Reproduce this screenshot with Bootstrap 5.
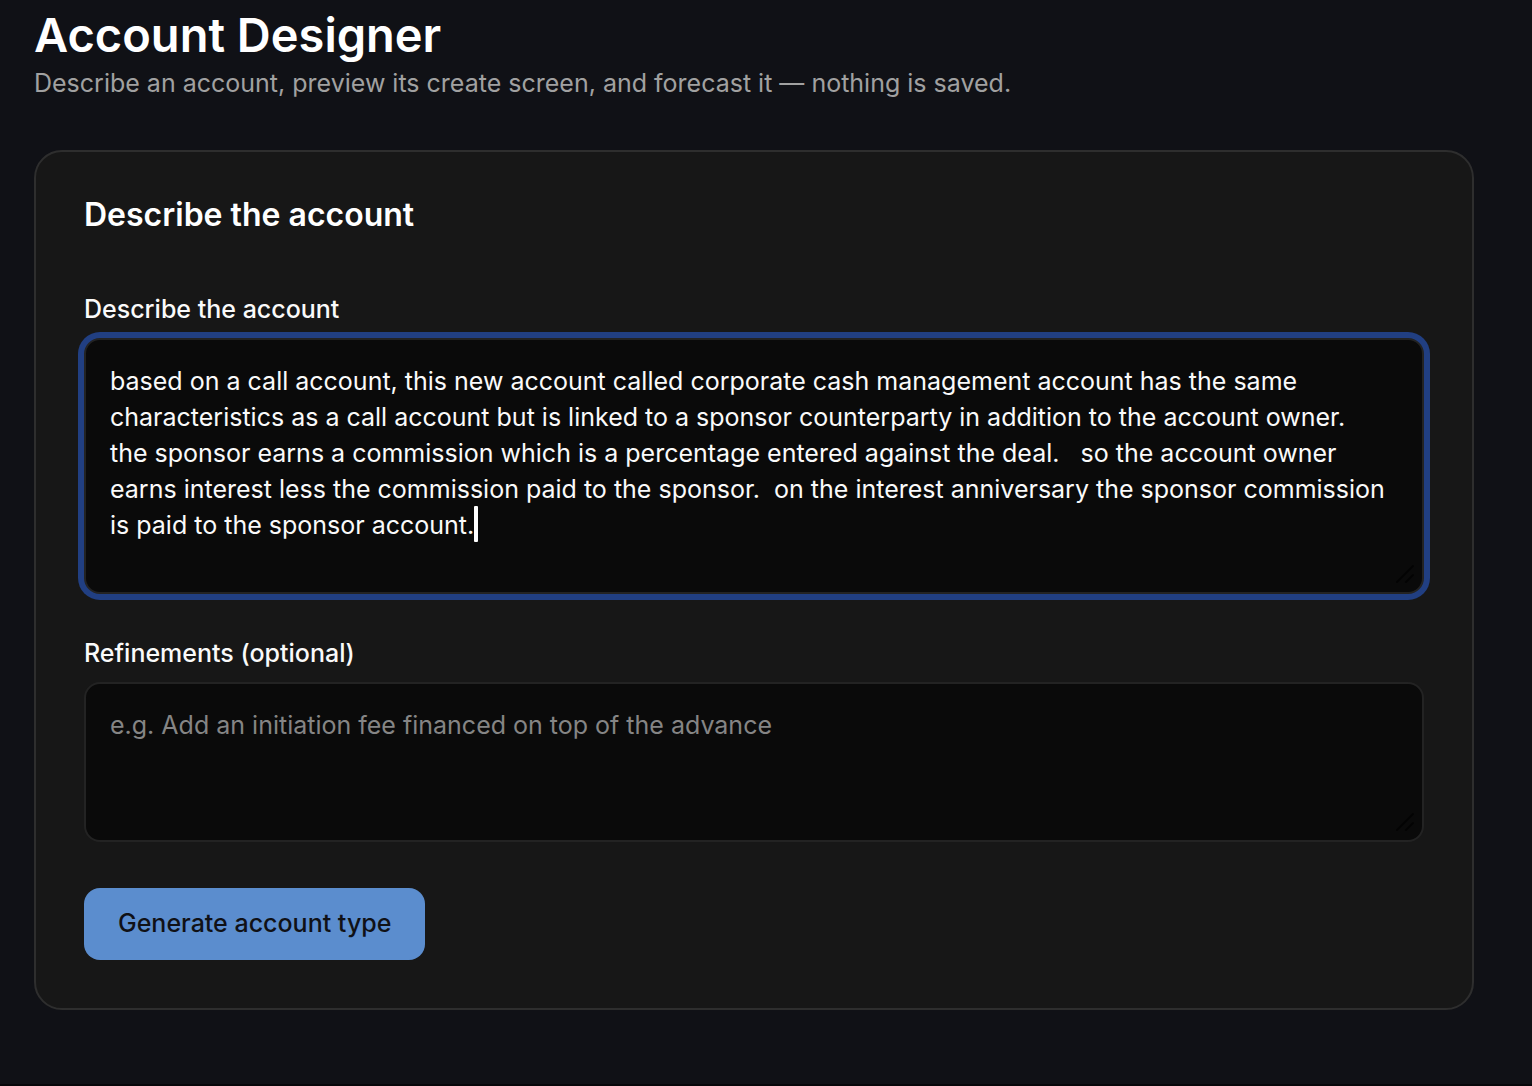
<!DOCTYPE html>
<html lang="en" data-bs-theme="dark">
<head>
<meta charset="utf-8">
<meta name="viewport" content="width=device-width, initial-scale=1">
<title>Account Designer</title>
<link href="https://cdn.jsdelivr.net/npm/bootstrap@5.3.0/dist/css/bootstrap.min.css" rel="stylesheet">
<style>
  body { background: #101116; color: #fafafa; font-family: Inter, "Liberation Sans", sans-serif; font-size: 25px; line-height: 36px; }
  .page { min-height: 100vh; padding: 7px 58px 74px 34px; border-bottom: 2px solid #07070a; }
  .page-title { font-size: 47px; line-height: 56px; font-weight: 600; }
  .page-intro { color: #a1a1a1; line-height: 40px; margin-bottom: 47px; }
  .panel { --bs-card-bg: #171717; --bs-card-color: #fafafa; --bs-card-border-color: #2e2e2e; --bs-card-border-width: 2px; --bs-card-border-radius: 28px; --bs-card-inner-border-radius: 26px; }
  .panel .card-body { padding: 43px 48px 48px; }
  .panel-title { font-size: 32px; line-height: 40px; font-weight: 600; margin-bottom: 58px; }
  .field-label { font-weight: 500; line-height: 32px; margin-bottom: 13px; }
  .field-wrap { margin-bottom: 43px; }
  .field-box { display: block; background: #0a0a0a; color: #fafafa; border: 2px solid #232323; border-radius: 16px; padding: 23px 32px 25px 24px; font-size: 25px; line-height: 36px; resize: none; overflow: hidden; }
  .field-box:focus { background: #0a0a0a; color: #fafafa; border-color: #232323; }
  .field-box::placeholder { color: #858585; }
  .field-box.is-active, .field-box.is-active:focus { min-height: 256px; box-shadow: 0 0 0 6px #213f82; caret-color: transparent; }
  .text-caret { left: 390px; top: 168px; width: 4px; height: 36px; border-radius: 1px; background: #fff; }
  .grip { right: 10px; bottom: 11px; width: 18px; height: 18px; opacity: .6; }
  .btn-generate { --bs-btn-bg: #5b8dce; --bs-btn-color: #101116; --bs-btn-hover-bg: #6c9ad6; --bs-btn-hover-color: #101116; --bs-btn-font-size: 25px; --bs-btn-font-weight: 500; --bs-btn-line-height: 36px; --bs-btn-border-width: 0; --bs-btn-border-radius: 16px; padding: 17px 34px 19px; margin-top: 3px; }
</style>
</head>
<body>
<main class="page">
  <h1 class="page-title mb-0">Account Designer</h1>
  <p class="page-intro">Describe an account, preview its create screen, and forecast it — nothing is saved.</p>
  <section class="card panel">
    <form class="card-body">
      <h2 class="panel-title">Describe the account</h2>
      <label class="form-label field-label d-block" for="description">Describe the account</label>
      <div class="field-wrap position-relative">
        <textarea class="form-control field-box is-active" id="description" rows="5">based on a call account, this new account called corporate cash management account has the same characteristics as a call account but is linked to a sponsor counterparty in addition to the account owner.  the sponsor earns a commission which is a percentage entered against the deal.   so the account owner earns interest less the commission paid to the sponsor.  on the interest anniversary the sponsor commission is paid to the sponsor account.</textarea>
        <span class="text-caret position-absolute" aria-hidden="true"></span>
        <svg class="grip position-absolute pe-none" viewBox="0 0 18 18" aria-hidden="true"><path d="M1 17 17 1M10 17 17 10" stroke="#000" stroke-width="2" stroke-linecap="round"/></svg>
      </div>
      <label class="form-label field-label d-block" for="refinements">Refinements (optional)</label>
      <div class="field-wrap position-relative">
        <textarea class="form-control field-box" id="refinements" rows="3" placeholder="e.g. Add an initiation fee financed on top of the advance"></textarea>
        <svg class="grip position-absolute pe-none" viewBox="0 0 18 18" aria-hidden="true"><path d="M1 17 17 1M10 17 17 10" stroke="#000" stroke-width="2" stroke-linecap="round"/></svg>
      </div>
      <button class="btn btn-generate" type="button">Generate account type</button>
    </form>
  </section>
</main>
<script src="https://cdn.jsdelivr.net/npm/bootstrap@5.3.0/dist/js/bootstrap.bundle.min.js"></script>
</body>
</html>
